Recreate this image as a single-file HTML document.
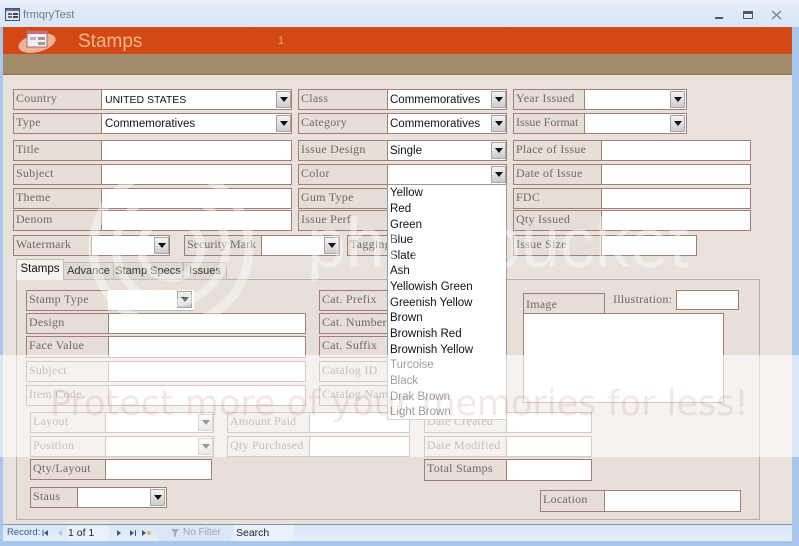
<!DOCTYPE html>
<html><head><meta charset="utf-8"><style>
html,body{margin:0;padding:0}
#p{position:relative;width:799px;height:546px;overflow:hidden;background:#e9e2dc;font-family:"Liberation Sans",sans-serif}
#p div,#p svg{position:absolute;box-sizing:border-box}
.l{background:#e6dfd8;border:1px solid #a07f78;font:12px/17px "Liberation Serif",serif;color:#6f6a62;padding-left:2px;white-space:nowrap;overflow:hidden;letter-spacing:.25px}
.i{background:#fff;border:1px solid #a07f78;font:11.5px/20px "Liberation Sans",sans-serif;color:#111;padding-left:3px;white-space:nowrap}
.b{width:15px;height:17px;background:linear-gradient(#f4f4f4,#ccc);border:1px solid #a5a5a5}
.b:after{content:"";position:absolute;left:3px;top:5px;border:4px solid transparent;border-top:5px solid #111;border-bottom:0}
.t{background:#dfd9d1;border:1px solid #c2bcb4;font:11px/19px "Liberation Sans",sans-serif;color:#333;text-align:center;white-space:nowrap;overflow:hidden}
.o{left:390px;margin-top:2px;font:11.5px/15px "Liberation Sans",sans-serif;color:#111;white-space:nowrap}
</style></head><body><div id="p">

<div style="left:0;top:0;width:799px;height:27px;background:linear-gradient(#e6eef9,#d8e6f6)"></div>
<div style="left:0;top:27px;width:3px;height:519px;background:#a9c7ed"></div>
<div style="left:792px;top:27px;width:7px;height:519px;background:#a9c7ed"></div>
<svg style="left:5px;top:8px" width="15" height="13"><rect x=".5" y=".5" width="14" height="12" fill="#dfe6f0" stroke="#44557a"/><rect x="1" y="1" width="13" height="2" fill="#5b70a0"/><rect x="3" y="5" width="4" height="2" fill="#667"/><rect x="8" y="5" width="5" height="2" fill="#445"/><rect x="3" y="8" width="4" height="2" fill="#667"/><rect x="8" y="8" width="5" height="2" fill="#445"/></svg>
<div style="left:23px;top:8px;font-size:11px;line-height:14px;color:#707a88">frmqryTest</div>
<div style="left:715px;top:17px;width:8px;height:2px;background:#556"></div>
<div style="left:743px;top:11px;width:10px;height:8px;border:1px solid #556;border-top:3px solid #556"></div>
<svg style="left:771px;top:10px" width="11" height="10"><path d="M1 1L10 9M10 1L1 9" stroke="#7a8494" stroke-width="1.4"/></svg>

<div style="left:3px;top:27px;width:789px;height:27px;background:#d34814"></div>
<div style="left:3px;top:54px;width:789px;height:21px;background:#a08c69;border-bottom:1px solid #a0674f"></div>
<div style="left:3px;top:75px;width:789px;height:449px;background:#e9e2dc"></div>
<svg style="left:18px;top:28px" width="40" height="27"><ellipse cx="19" cy="15" rx="19" ry="9" fill="#eeb295" transform="rotate(-14 19 15)"/><rect x="9" y="3" width="20" height="16" fill="#f4eef0" stroke="#a86a70"/><rect x="9" y="3" width="20" height="3" fill="#d06a80"/><rect x="12" y="9" width="6" height="3" fill="#bbb"/><rect x="20" y="9" width="7" height="3" fill="#999"/><rect x="20" y="14" width="7" height="3" fill="#999"/></svg>
<div style="left:78px;top:30px;font-size:19px;line-height:23px;color:#f6b58a">Stamps</div>
<div style="left:278px;top:34px;font-size:11px;line-height:14px;color:#f5a56a">1</div>

<!-- top rows -->
<div class="l" style="left:13px;top:89px;width:89px;height:21px">Country</div><div class="i" style="left:101px;top:89px;width:191px;height:21px;font-size:10.5px">UNITED STATES<div class="b" style="left:174px;top:1px"></div></div>
<div class="l" style="left:13px;top:113px;width:89px;height:21px">Type</div><div class="i" style="left:101px;top:113px;width:191px;height:21px">Commemoratives<div class="b" style="left:174px;top:1px"></div></div>
<div class="l" style="left:298px;top:89px;width:90px;height:21px">Class</div><div class="i" style="left:387px;top:89px;width:120px;height:21px;padding-left:2px">Commemoratives<div class="b" style="left:103px;top:1px"></div></div>
<div class="l" style="left:298px;top:113px;width:90px;height:21px">Category</div><div class="i" style="left:387px;top:113px;width:120px;height:21px;padding-left:2px">Commemoratives<div class="b" style="left:103px;top:1px"></div></div>
<div class="l" style="left:513px;top:89px;width:72px;height:21px">Year Issued</div><div class="i" style="left:584px;top:89px;width:103px;height:21px"><div class="b" style="left:85px;top:1px"></div></div>
<div class="l" style="left:513px;top:113px;width:72px;height:21px;letter-spacing:0">Issue Format</div><div class="i" style="left:584px;top:113px;width:103px;height:21px"><div class="b" style="left:85px;top:1px"></div></div>

<div class="l" style="left:13px;top:140px;width:89px;height:21px">Title</div><div class="i" style="left:101px;top:140px;width:191px;height:21px"></div>
<div class="l" style="left:13px;top:164px;width:89px;height:21px">Subject</div><div class="i" style="left:101px;top:164px;width:191px;height:21px"></div>
<div class="l" style="left:13px;top:188px;width:89px;height:21px">Theme</div><div class="i" style="left:101px;top:188px;width:191px;height:21px"></div>
<div class="l" style="left:13px;top:210px;width:89px;height:21px">Denom</div><div class="i" style="left:101px;top:210px;width:191px;height:21px"></div>

<div class="l" style="left:298px;top:140px;width:90px;height:21px">Issue Design</div><div class="i" style="left:387px;top:140px;width:120px;height:21px;padding-left:2px">Single<div class="b" style="left:103px;top:1px"></div></div>
<div class="l" style="left:298px;top:164px;width:90px;height:21px">Color</div><div class="i" style="left:387px;top:164px;width:120px;height:21px"><div class="b" style="left:103px;top:1px"></div></div>
<div class="l" style="left:298px;top:188px;width:90px;height:21px">Gum Type</div>
<div class="l" style="left:298px;top:210px;width:90px;height:21px">Issue Perf</div>

<div class="l" style="left:513px;top:140px;width:89px;height:21px">Place of Issue</div><div class="i" style="left:601px;top:140px;width:150px;height:21px"></div>
<div class="l" style="left:513px;top:164px;width:89px;height:21px">Date of Issue</div><div class="i" style="left:601px;top:164px;width:150px;height:21px"></div>
<div class="l" style="left:513px;top:188px;width:89px;height:21px">FDC</div><div class="i" style="left:601px;top:188px;width:150px;height:21px"></div>
<div class="l" style="left:513px;top:210px;width:89px;height:21px">Qty Issued</div><div class="i" style="left:601px;top:210px;width:150px;height:21px"></div>

<div class="l" style="left:13px;top:235px;width:79px;height:21px">Watermark</div><div class="i" style="left:91px;top:235px;width:79px;height:21px"><div class="b" style="left:62px;top:1px"></div></div>
<div class="l" style="left:184px;top:235px;width:78px;height:21px;letter-spacing:0">Security Mark</div><div class="i" style="left:261px;top:235px;width:79px;height:21px"><div class="b" style="left:62px;top:1px"></div></div>
<div class="l" style="left:347px;top:235px;width:41px;height:21px">Tagging</div>
<div class="l" style="left:513px;top:235px;width:89px;height:21px">Issue Size</div><div class="i" style="left:601px;top:235px;width:96px;height:21px"></div>

<!-- tabs -->
<div style="left:16px;top:279px;width:744px;height:241px;background:#e6e0d8;border:1px solid #b5afa6"></div>
<div class="t" style="left:16px;top:259px;width:48px;height:21px;background:#f6f3ef;border-bottom:0;color:#111;font-size:11.5px">Stamps</div>
<div class="t" style="left:63px;top:262px;width:51px;height:18px;line-height:16px">Advance</div>
<div class="t" style="left:113px;top:262px;width:70px;height:18px;line-height:16px">Stamp Specs</div>
<div class="t" style="left:183px;top:262px;width:44px;height:18px;line-height:16px">Issues</div>

<div class="l" style="left:26px;top:290px;width:83px;height:21px">Stamp Type</div><div class="i" style="left:108px;top:290px;width:86px;height:21px;border:0;border-bottom:1px solid #bbb"><div class="b" style="left:69px;top:1px"></div></div>
<div class="l" style="left:26px;top:313px;width:83px;height:21px">Design</div><div class="i" style="left:108px;top:313px;width:198px;height:21px"></div>
<div class="l" style="left:26px;top:336px;width:83px;height:22px">Face Value</div><div class="i" style="left:108px;top:336px;width:198px;height:22px"></div>
<div class="l" style="left:26px;top:361px;width:83px;height:21px">Subject</div><div class="i" style="left:108px;top:361px;width:198px;height:21px"></div>
<div class="l" style="left:26px;top:385px;width:83px;height:21px">Item Code</div><div class="i" style="left:108px;top:385px;width:198px;height:21px"></div>

<div class="l" style="left:319px;top:290px;width:70px;height:21px">Cat. Prefix</div>
<div class="l" style="left:319px;top:313px;width:70px;height:21px">Cat. Number</div>
<div class="l" style="left:319px;top:336px;width:70px;height:22px">Cat. Suffix</div>
<div class="l" style="left:319px;top:361px;width:70px;height:21px">Catalog ID</div>
<div class="l" style="left:319px;top:385px;width:70px;height:21px">Catalog Name</div>

<div class="l" style="left:523px;top:293px;width:82px;height:22px;line-height:20px">Image</div>
<div class="i" style="left:523px;top:313px;width:201px;height:90px"></div>
<div style="left:613px;top:291px;font:12px/16px 'Liberation Serif',serif;color:#6f6a62;letter-spacing:.25px">Illustration:</div>
<div class="i" style="left:676px;top:290px;width:63px;height:20px"></div>

<div class="l" style="left:30px;top:412px;width:76px;height:21px">Layout</div><div class="i" style="left:105px;top:412px;width:109px;height:21px"><div class="b" style="left:92px;top:1px"></div></div>
<div class="l" style="left:30px;top:436px;width:76px;height:21px">Position</div><div class="i" style="left:105px;top:436px;width:109px;height:21px"><div class="b" style="left:92px;top:1px"></div></div>
<div class="l" style="left:30px;top:459px;width:76px;height:21px">Qty/Layout</div><div class="i" style="left:105px;top:459px;width:107px;height:21px"></div>
<div class="l" style="left:30px;top:487px;width:48px;height:21px">Staus</div><div class="i" style="left:77px;top:487px;width:90px;height:21px"><div class="b" style="left:72px;top:1px"></div></div>

<div class="l" style="left:227px;top:412px;width:83px;height:21px">Amount Paid</div><div class="i" style="left:309px;top:412px;width:101px;height:21px"></div>
<div class="l" style="left:227px;top:436px;width:83px;height:21px">Qty Purchased</div><div class="i" style="left:309px;top:436px;width:101px;height:21px"></div>

<div class="l" style="left:424px;top:412px;width:83px;height:21px">Date Created</div><div class="i" style="left:506px;top:412px;width:86px;height:21px"></div>
<div class="l" style="left:424px;top:436px;width:83px;height:21px">Date Modified</div><div class="i" style="left:506px;top:436px;width:86px;height:21px"></div>
<div class="l" style="left:424px;top:459px;width:83px;height:22px">Total Stamps</div><div class="i" style="left:506px;top:459px;width:86px;height:22px"></div>
<div class="l" style="left:540px;top:490px;width:65px;height:22px">Location</div><div class="i" style="left:604px;top:490px;width:137px;height:22px"></div>

<!-- dropdown -->
<div style="left:387px;top:184px;width:120px;height:236px;background:#fff;border:1px solid #999"></div>
<div class="o" style="top:184px">Yellow</div>
<div class="o" style="top:200px">Red</div>
<div class="o" style="top:216px">Green</div>
<div class="o" style="top:231px">Blue</div>
<div class="o" style="top:247px">Slate</div>
<div class="o" style="top:262px">Ash</div>
<div class="o" style="top:278px">Yellowish Green</div>
<div class="o" style="top:294px">Greenish Yellow</div>
<div class="o" style="top:309px">Brown</div>
<div class="o" style="top:325px">Brownish Red</div>
<div class="o" style="top:341px">Brownish Yellow</div>
<div class="o" style="top:356px">Turcoise</div>
<div class="o" style="top:372px">Black</div>
<div class="o" style="top:388px">Drak Brown</div>
<div class="o" style="top:403px">Light Brown</div>

<!-- status bar -->
<div style="left:3px;top:524px;width:789px;height:18px;background:linear-gradient(#d5e5f8,#e6f0fc);border-top:1px solid #8a97a8"></div>
<div style="left:0;top:541px;width:799px;height:5px;background:#a9c7ed"></div>
<div style="left:7px;top:526px;font-size:9.5px;line-height:14px;color:#3c5a80">Record:</div>
<svg style="left:42px;top:529px" width="120" height="9"><path d="M1 1V7" stroke="#3c5a80"/><path d="M6 1L2 4L6 7Z" fill="#3c5a80"/><path d="M20 1L16 4L20 7Z" fill="#b5c4d6"/><path d="M75 1L79 4L75 7Z" fill="#3c5a80"/><path d="M88 1L92 4L88 7Z" fill="#3c5a80"/><path d="M93.500 1V7" stroke="#3c5a80"/><path d="M100 1L104 4L100 7Z" fill="#3c5a80"/><circle cx="107" cy="4" r="2" fill="#e0bb50"/></svg>
<div style="left:67px;top:526px;width:42px;height:15px;background:#e8f1fc;font-size:10.5px;line-height:15px;color:#222;padding-left:1px">1 of 1</div>
<div style="left:157px;top:525px;width:74px;height:16px;background:#dbe7f7"></div>
<svg style="left:170px;top:528px" width="11" height="11"><path d="M1 1H9L6 5V9L4 8V5Z" fill="#a5b0bd"/></svg>
<div style="left:183px;top:526px;font-size:10px;line-height:14px;color:#9aa6b4">No Filter</div>
<div style="left:234px;top:525px;width:60px;height:16px;background:#e8f1fc;font-size:10.5px;line-height:16px;color:#222;padding-left:2px">Search</div>

<!-- watermark -->
<div style="left:0;top:355px;width:799px;height:102px;background:rgba(255,255,255,.58)"></div>
<svg style="left:86px;top:163px" width="170" height="170" fill="none" stroke="#fff" stroke-opacity=".42"><circle cx="85" cy="85" r="78" stroke-width="9"/><circle cx="85" cy="85" r="55" stroke-width="8"/><circle cx="85" cy="85" r="30" stroke-width="8"/></svg>
<div style="left:307px;top:198px;font-size:70px;line-height:90px;color:rgba(255,255,255,.42);white-space:nowrap">photobucket</div>
<div style="left:50px;top:381px;font:35px/46px 'DejaVu Sans',sans-serif;color:rgba(180,130,110,.18);white-space:nowrap">Protect more of your memories for less!</div>
</div></body></html>
